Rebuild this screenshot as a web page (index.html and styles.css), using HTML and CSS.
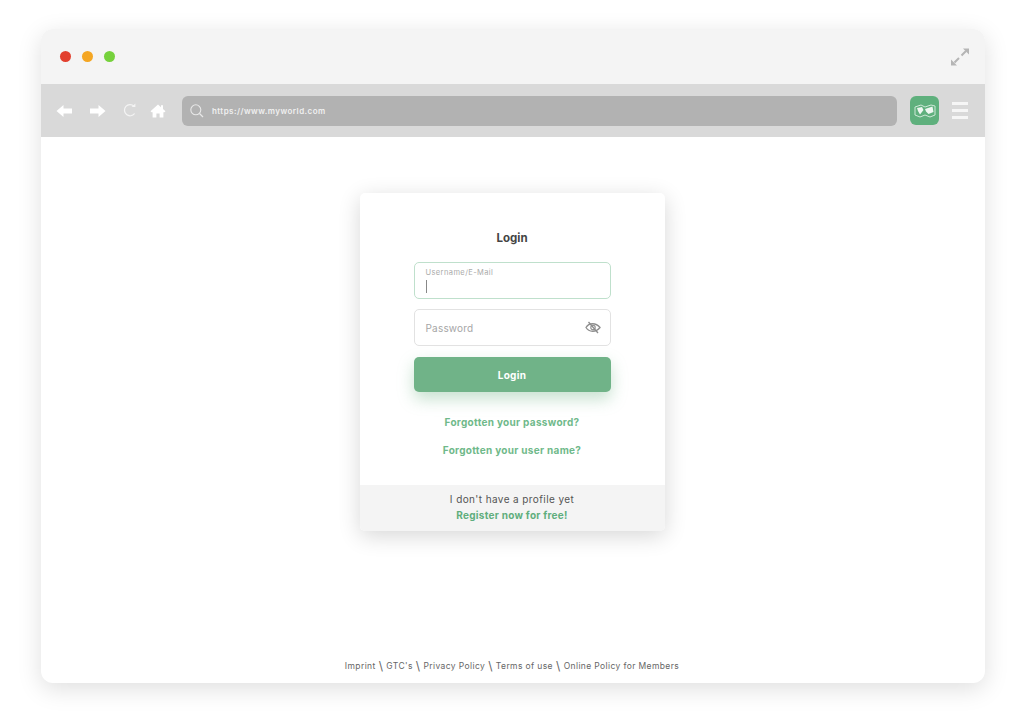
FILE: index.html
```html
<!DOCTYPE html>
<html lang="en">
<head>
  <meta charset="utf-8">
  <title>Login</title>
  <link rel="stylesheet" href="styles.css">
</head>
<body>

<div class="window">
  <div class="titlebar">
    <div class="dots">
      <span class="dot dot-red"></span>
      <span class="dot dot-orange"></span>
      <span class="dot dot-green"></span>
    </div>
    <svg class="expand" width="20" height="20" viewBox="0 0 20 20">
      <path d="M11.5 8.5 L16 4 M9 11 L4.5 15.5" fill="none" stroke="#b5b5b5" stroke-width="2"/>
      <path d="M13 1.5 H19 V7.5 Z M1 12.5 V18.5 H7 Z" fill="#b5b5b5"/>
    </svg>
  </div>

  <div class="toolbar">
    <svg class="tool" width="17" height="14" viewBox="0 0 17 14">
      <path d="M0.5 7 L7.5 1 V4.5 H16 V9.5 H7.5 V13 Z" fill="#fff"/>
    </svg>
    <svg class="tool" width="17" height="14" viewBox="0 0 17 14">
      <path d="M16.5 7 L9.5 1 V4.5 H1 V9.5 H9.5 V13 Z" fill="#fff"/>
    </svg>
    <svg class="tool tool-reload" width="15" height="15" viewBox="0 0 15 15">
      <path d="M12 3.2 A5.6 5.6 0 1 0 12.6 10.5" fill="none" stroke="#f4f4f4" stroke-width="1.2"/>
      <path d="M9.6 4 H13.4 V0.6 Z" fill="#f4f4f4"/>
    </svg>
    <svg class="tool tool-home" width="16" height="14" viewBox="0 0 16 14">
      <path d="M8 0.5 L11 3.2 V1.2 H13 V5 L15.5 7.2 L14.4 8.2 H13.4 V13.5 H9.6 V9.5 H6.4 V13.5 H2.6 V8.2 H1.6 L0.5 7.2 Z" fill="#fff"/>
    </svg>
    <div class="address">
      <svg width="16" height="16" viewBox="0 0 16 16">
        <circle cx="6.8" cy="6.8" r="5" fill="none" stroke="#e8e8e8" stroke-width="1.1"/>
        <path d="M10.5 10.5 L14 14" stroke="#e8e8e8" stroke-width="1.3"/>
      </svg>
      <span class="url">https://www.myworld.com</span>
    </div>
    <div class="map-btn">
      <svg width="22" height="14" viewBox="0 0 22 14">
        <path d="M1 3 L7 1 L11 3 L17 1 L21 2 V11 L16 13 L11 11 L6 13 L1 11 Z" fill="none" stroke="#cfe8d8" stroke-width="1"/>
        <path d="M3 4 L8 3 L9.5 6 L6 10.5 L4 7 Z M11 5 L18.5 2.5 L19.5 8 L14.5 10 L12 7.5 Z" fill="#eef7f1"/>
      </svg>
    </div>
    <div class="burger"><span></span><span></span><span></span></div>
  </div>

  <div class="page">
    <div class="card">
      <div class="card-main">
        <h1>Login</h1>
        <div class="field field-active">
          <label>Username/E-Mail</label>
          <span class="caret"></span>
        </div>
        <div class="field field-pass">
          <span class="placeholder">Password</span>
          <svg width="16" height="13" viewBox="0 0 16 13">
            <path d="M1 6.5 C4 1.5 11 1.5 15 6.5 C11 11.5 4 11.5 1 6.5 Z" fill="none" stroke="#8d8d8d" stroke-width="1.3"/>
            <circle cx="8" cy="6.5" r="2.2" fill="none" stroke="#8d8d8d" stroke-width="1.1"/>
            <path d="M3.5 1 L13 12" stroke="#8d8d8d" stroke-width="1.3"/>
          </svg>
        </div>
        <button class="login-btn">Login</button>
        <a class="link link-first" href="#">Forgotten your password?</a>
        <a class="link" href="#">Forgotten your user name?</a>
      </div>
      <div class="card-foot">
        <span>I don't have a profile yet</span>
        <a class="link-strong" href="#">Register now for free!</a>
      </div>
    </div>

    <div class="legal">
      <span>Imprint</span><span class="sep">\</span>
      <span>GTC's</span><span class="sep">\</span>
      <span>Privacy Policy</span><span class="sep">\</span>
      <span>Terms of use</span><span class="sep">\</span>
      <span>Online Policy for Members</span>
    </div>
  </div>
</div>

</body>
</html>
```

FILE: styles.css
```css
html, body {
  height: 100%;
  margin: 0;
}

body {
  background: white;
  font-family: Inter, "Open Sans", "Liberation Sans", sans-serif;
  color: #444;
  padding: 29px 39px 39px 41px;
  box-sizing: border-box;
}

.window {
  height: 654px;
  display: flex;
  flex-direction: column;
  border-radius: 12px;
  overflow: hidden;
  background: white;
  box-shadow: 0 6px 24px rgba(0, 0, 0, 0.13);
}

.titlebar {
  height: 55px;
  background: #f4f4f4;
  display: flex;
  align-items: center;
  justify-content: space-between;
  padding: 0 15px 0 19px;
}

.dots {
  display: flex;
  gap: 11px;
}

.dot {
  width: 11px;
  height: 11px;
  border-radius: 50%;
}

.dot-red { background: #e2402f; }
.dot-orange { background: #f4a623; }
.dot-green { background: #76d13c; }

.toolbar {
  height: 53px;
  background: #d9d9d9;
  display: flex;
  align-items: center;
  padding: 0 17px 0 15px;
}

.tool {
  margin-right: 16px;
  flex: none;
}

.tool-reload {
  margin-right: 13px;
}

.address {
  flex: 1;
  height: 30px;
  margin-right: 13px;
  background: #b2b2b2;
  border-radius: 6px;
  display: flex;
  align-items: center;
  gap: 7px;
  padding-left: 7px;
}

.url {
  font-size: 8px;
  font-weight: 600;
  letter-spacing: 0.45px;
  color: #f0f0f0;
}

.map-btn {
  width: 29px;
  height: 29px;
  background: #5fb07d;
  border-radius: 6px;
  display: flex;
  align-items: center;
  justify-content: center;
}

.burger {
  margin-left: 13px;
  width: 16px;
  display: flex;
  flex-direction: column;
  gap: 4px;
}

.burger span {
  height: 3px;
  background: #f6f6f6;
}

.page {
  flex: 1;
  display: flex;
  flex-direction: column;
  align-items: center;
  padding: 56px 2px 0 0;
}

.card {
  width: 305px;
  height: 338px;
  display: flex;
  flex-direction: column;
  background: white;
  border-radius: 5px;
  overflow: hidden;
  box-shadow: 0 5px 22px rgba(0, 0, 0, 0.16);
}

.card-main {
  flex: 1;
  padding: 37px 54px 0;
  display: flex;
  flex-direction: column;
  align-items: center;
}

h1 {
  font-size: 11.5px;
  line-height: 16px;
  font-weight: 700;
  color: #444;
  margin: 0 0 16px;
}

.field {
  width: 100%;
  height: 37px;
  box-sizing: border-box;
  border: 1px solid #e2e2e2;
  border-radius: 5px;
  background: white;
  padding: 0 11px;
}

.field-active {
  border: 1.5px solid #bfe0cc;
  margin-bottom: 10px;
  padding-top: 5px;
}

.field-active label {
  display: block;
  font-size: 7.5px;
  line-height: 10px;
  letter-spacing: 0.4px;
  color: #aaa;
}

.caret {
  display: block;
  width: 1px;
  height: 13px;
  margin-top: 2px;
  background: #888;
}

.field-pass {
  display: flex;
  align-items: center;
  justify-content: space-between;
  padding-right: 9px;
}

.placeholder {
  font-size: 10px;
  letter-spacing: 0.2px;
  color: #a6a6a6;
}

.login-btn {
  width: 100%;
  height: 35px;
  margin-top: 11px;
  border: 0;
  border-radius: 5px;
  background: #70b388;
  color: white;
  font: inherit;
  font-size: 10px;
  font-weight: 700;
  letter-spacing: 0.3px;
  box-shadow: 0 7px 16px rgba(112, 179, 136, 0.4);
}

.link {
  font-size: 10px;
  line-height: 14px;
  font-weight: 700;
  letter-spacing: 0.3px;
  color: #6fb98a;
  text-decoration: none;
  margin-top: 14px;
  white-space: nowrap;
}

.link-first {
  margin-top: 23px;
}

.card-foot {
  height: 46px;
  box-sizing: border-box;
  padding-bottom: 3px;
  background: #f4f4f4;
  display: flex;
  flex-direction: column;
  align-items: center;
  justify-content: center;
  font-size: 10px;
  line-height: 16px;
  letter-spacing: 0.4px;
  color: #555;
}

.link-strong {
  font-weight: 700;
  letter-spacing: 0.27px;
  color: #5fae7d;
  text-decoration: none;
}

.legal {
  margin-top: auto;
  height: 23px;
  display: flex;
  align-items: flex-start;
  gap: 2px;
  font-size: 8.5px;
  line-height: 12px;
  letter-spacing: 0.38px;
  color: #666;
}

.sep {
  font-size: 12px;
  line-height: 12px;
  margin: 0 1px;
}
```
